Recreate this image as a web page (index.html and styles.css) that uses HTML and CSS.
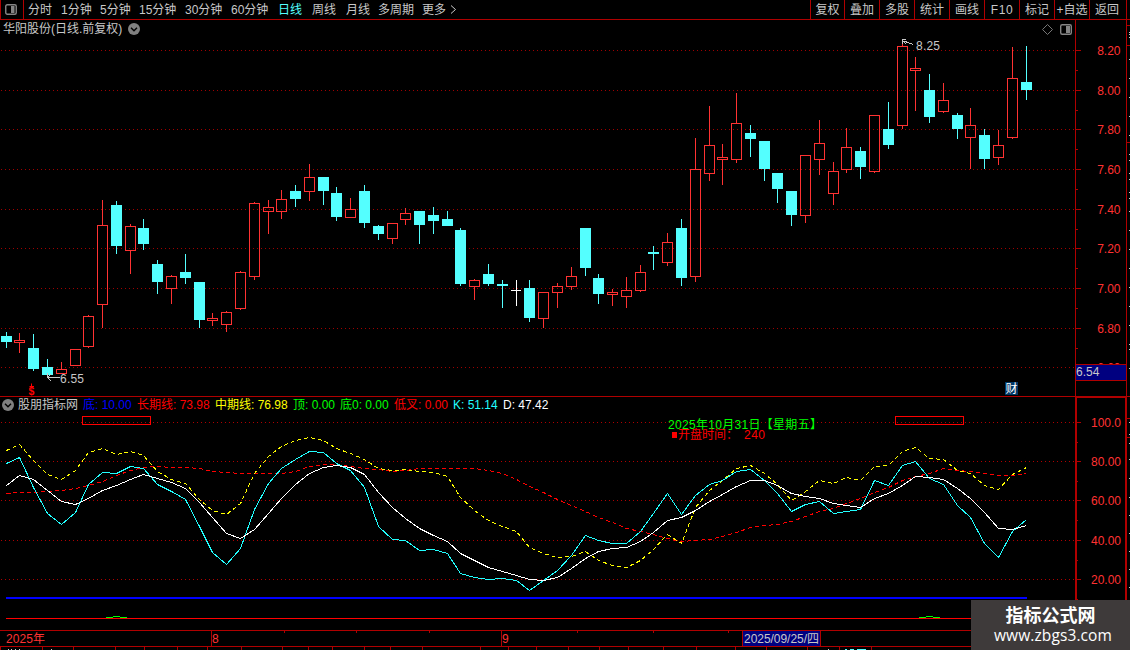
FILE: index.html
```html
<!DOCTYPE html>
<html lang="zh-CN">
<head>
<meta charset="utf-8">
<title>华阳股份 日线</title>
<link rel="stylesheet" href="styles.css">
</head>
<body>
<div class="app">
  <header class="toolbar">
    <div class="layout-btn">
      <svg width="12" height="11" viewBox="0 0 12 11"><rect x="0.75" y="0.75" width="10.5" height="9.5" rx="1.5" fill="none" stroke="#858585" stroke-width="1.4"/><rect x="6" y="2" width="3.5" height="7" fill="#858585"/></svg>
    </div>
    <nav class="periods">
      <span class="w33">分时</span><span class="w39">1分钟</span><span class="w39">5分钟</span><span class="w46">15分钟</span><span class="w46">30分钟</span><span class="w47">60分钟</span><span class="w34 active">日线</span><span class="w34">周线</span><span class="w32">月线</span><span class="w44">多周期</span><span class="w28">更多</span>
      <svg width="7" height="9" viewBox="0 0 7 9"><path d="M1 .5 5.5 4.5 1 8.5" fill="none" stroke="#c8c8c8"/></svg>
    </nav>
    <nav class="tools">
      <span class="t34">复权</span><span>叠加</span><span>多股</span><span>统计</span><span>画线</span><span class="latin">F10</span><span>标记</span><span>+自选</span><span class="t37">返回</span>
    </nav>
  </header>

  <section class="panel">
    <div class="caption">
      <span class="cap-text">华阳股份(日线.前复权)</span>
      <svg width="12" height="12" viewBox="0 0 12 12"><circle cx="6" cy="6" r="6" fill="#808080"/><path d="M3 4.7 6 7.7 9 4.7" fill="none" stroke="#000" stroke-width="1.4"/></svg>
    </div>
    <svg class="chart" width="1130" height="376" viewBox="0 20 1130 376">
      <g id="price-grid"></g>
      <g id="candles"></g>
      <g class="ann-line">
        <path d="M902.5 44V39.5H906M902 41.5H906M905 41.5 913.5 44.5M903 41 906 44"/>
        <path d="M47 377.5H59.5M47.500 373V378M47 377 51 381M48 377 51 374"/>
      </g>
      <text class="ann" x="916" y="50" textLength="24">8.25</text>
      <text class="ann" x="60" y="383" textLength="24">6.55</text>
      <path d="M31.500 383.500V387M29.500 386.500H34" stroke="red" fill="none"/>
      <text class="dividend" x="28.500" y="394.500">$</text>
      <path d="M1047.500 24.500 1052.500 29.500 1047.500 34.500 1042.500 29.500Z" fill="none" stroke="#777"/>
      <rect x="1060.700" y="24.700" width="10.600" height="9.600" rx="1.500" fill="none" stroke="#858585" stroke-width="1.400"/>
      <rect x="1066" y="26" width="4" height="7" fill="#858585"/>
      <rect x="1005" y="382" width="13" height="13" fill="#003866"/>
      <text class="news" x="1005.500" y="393">财</text>
    </svg>
  </section>

  <section class="panel indicator">
    <div class="legend">
      <svg width="12" height="12" viewBox="0 0 12 12"><circle cx="6" cy="6" r="6" fill="#808080"/><path d="M3 4.700 6 7.700 9 4.700" fill="none" stroke="#000" stroke-width="1.400"/></svg>
      <span class="lg name">股朋指标网</span><span class="lg bottom">底: 10.00</span><span class="lg long">长期线: 73.98</span><span class="lg mid">中期线: 76.98</span><span class="lg top">顶: 0.00</span><span class="lg zero">底0: 0.00</span><span class="lg cross">低叉: 0.00</span><span class="lg k">K: 51.14</span><span class="lg d">D: 47.42</span>
    </div>
    <svg class="chart" width="1130" height="234" viewBox="0 396 1130 234">
      <g id="osc-grid"></g>
      <g id="osc-lines"></g>
      <g fill="none" stroke="#f00"><rect x="82.500" y="416.500" width="68" height="8"/><rect x="895.500" y="416.500" width="68" height="8"/></g>
      <text class="today" x="668" y="428.500" textLength="154">2025年10月31日【星期五】</text>
      <rect x="672" y="432" width="5" height="6" fill="#f00"/>
      <text class="open" x="678" y="438.500" textLength="60">开盘时间：</text>
      <text class="open" x="744" y="438.500" textLength="21">240</text>
      <rect x="6" y="597" width="1021" height="2" fill="#00f"/>
      <rect x="6" y="618" width="1021" height="1" fill="#f00"/>
      <path d="M106 617.500H113M113 616.500H120M120 617.500H127M919 617.500H926M926 616.500H933M933 617.500H940" stroke="#0f0"/>
    </svg>
  </section>

  <footer class="panel">
    <svg class="chart" width="1130" height="20" viewBox="0 630 1130 20">
      <g id="time-axis"></g>
      <text class="axis" x="6" y="643" textLength="39">2025年</text>
      <text class="axis" x="212" y="643">8</text>
      <text class="axis" x="502" y="643">9</text>
      <rect x="742.500" y="630.500" width="78" height="16" fill="#000080" stroke="#b00000"/>
      <text class="ann" x="744" y="642.500" textLength="75">2025/09/25/四</text>
    </svg>
  </footer>

  <aside class="watermark">
    <div class="wm-title">指标公式网</div>
    <div class="wm-url">www.zbgs3.com</div>
  </aside>
</div>
<script src="chart.js"></script>
</body>
</html>
```

FILE: styles.css
```css
* { box-sizing: border-box; }
body { margin: 0; background: #000; overflow: hidden; }
.app {
  position: relative;
  width: 1130px;
  height: 650px;
  display: flex;
  flex-direction: column;
  background: #000;
  color: #c8c8c8;
  font-family: "Liberation Sans", "Noto Sans CJK SC", sans-serif;
  font-size: 12px;
  line-height: 18px;
  white-space: nowrap;
}
.toolbar {
  display: flex;
  height: 20px;
  flex: none;
  border-bottom: 1px solid #b00000;
}
.layout-btn {
  width: 24px;
  border-left: 1px solid #b00000;
  border-right: 1px solid #b00000;
  display: flex;
  align-items: center;
  padding-left: 4px;
}
.periods { display: flex; padding-left: 4px; align-items: center; }
.w28 { width: 28px; }
.w32 { width: 32px; }
.w33 { width: 33px; }
.w34 { width: 34px; }
.w39 { width: 39px; }
.w44 { width: 44px; }
.w46 { width: 46px; }
.w47 { width: 47px; }
.active { color: #54ffff; }
.tools { display: flex; margin-left: auto; margin-right: 3px; border-right: 1px solid #b00000; }
.tools span { width: 35px; border-left: 1px solid #b00000; text-align: center; line-height: 20px; }
.tools .t34 { width: 34px; }
.tools .t37 { width: 37px; padding-right: 2px; }
.tools .latin { letter-spacing: 0.6px; }
.panel { position: relative; flex: none; }
.chart { display: block; }
.caption, .legend {
  position: absolute;
  left: 0;
  top: 0;
  display: flex;
  align-items: center;
  height: 18px;
}
.caption { padding-left: 3px; gap: 5px; }
.cap-text { width: 120px; line-height: 20px; }
.legend { padding-left: 2px; }
.lg { flex: none; }
.name { width: 65px; margin-left: 4px; }
.bottom { width: 54px; color: #00f; }
.long { width: 78px; color: #f00; }
.mid { width: 78px; color: #ff0; }
.top { width: 47px; color: #0f0; }
.zero { width: 54px; color: #0f0; }
.cross { width: 59px; color: #f00; }
.k { width: 50px; color: #2ff; }
.d { color: #fff; }
text { font-family: "Liberation Sans", "Noto Sans CJK SC", sans-serif; font-size: 12px; }
.ann { fill: #c8c8c8; }
.ann-line { fill: none; stroke: #c8c8c8; shape-rendering: crispEdges; }
.axis { fill: #ff3232; }
.dividend { fill: #f00; font-size: 10.5px; font-weight: bold; }
.news { fill: #fff; }
.today { fill: #0f0; }
.open { fill: #f00; }
.watermark {
  position: absolute;
  left: 971px;
  top: 600px;
  width: 159px;
  height: 50px;
  background: #3e3a3a;
  color: #fff;
  text-align: center;
}
.wm-title {
  font: bold 18px/22px "Noto Sans CJK SC", sans-serif;
  padding-top: 3px;
}
.wm-url {
  font: 15.5px/19px "Open Sans", sans-serif;
  padding: 1px 0 0 5px;
  letter-spacing: 0.1px;
}
```

FILE: chart.js
```js
const NS = 'http://www.w3.org/2000/svg';
const RED = '#ff3232', CYAN = '#54ffff', AXIS = '#b00000';

function add(parent, tag, attrs, text) {
  const el = document.createElementNS(NS, tag);
  for (const k in attrs) el.setAttribute(k, attrs[k]);
  if (text) el.textContent = text;
  parent.appendChild(el);
  return el;
}
const rect = (g, x, y, w, h, fill) => add(g, 'rect', { x, y, width: w, height: h, fill });

// Bar centres; both panels share them.
const xs = [6,19,33,47,61,75,88,102,116,130,143,157,171,185,199,212,226,240,254,268,281,295,309,323,336,350,364,378,392,405,419,433,447,460,474,488,502,516,529,543,557,571,585,598,612,626,640,653,667,681,695,709,722,736,750,764,777,791,805,819,833,846,860,874,888,902,915,929,943,957,970,984,998,1012,1026];

// kind, body top, body bottom, high, low
const bars = `d 336 342 332 348|u 340 343 333 353|d 348 369 334 371|d 367 375 359 375|u 369 374 362 374|u 349 366 349 366|u 316 347 315 348|u 225 305 200 328|d 205 246 201 254|u 226 251 224 274|d 228 244 219 250|d 264 282 260 294|u 276 289 275 304|d 272 278 254 284|d 282 320 282 328|u 318 321 313 326|u 312 325 311 332|u 272 309 271 310|u 203 277 202 280|u 207 212 200 234|u 199 212 190 219|d 191 199 185 207|u 177 192 164 201|d 177 191 177 205|d 193 217 187 221|u 209 218 198 218|d 191 223 185 228|d 226 234 225 240|u 223 239 223 244|u 213 220 208 225|d 211 225 211 244|d 215 221 207 234|d 219 226 211 226|d 230 284 228 286|u 280 287 279 300|d 274 284 264 286|d 284 286 280 308|f 290 291 280 306|d 288 318 280 322|u 292 319 292 328|u 286 293 283 308|u 276 287 267 290|d 228 268 228 276|d 278 294 274 304|u 292 295 289 306|u 290 297 277 308|u 272 291 265 292|d 252 254 246 270|u 242 263 233 266|d 228 278 219 286|u 169 277 138 282|u 145 174 106 181|u 157 160 144 185|u 123 160 93 163|d 133 139 125 157|d 141 169 141 181|d 173 189 173 203|d 191 215 191 226|u 155 216 155 223|u 143 160 120 175|u 171 194 162 205|u 147 170 128 173|d 151 167 147 179|u 115 172 115 173|d 129 145 102 149|u 46 126 43 129|u 68 71 57 111|d 90 117 74 123|u 100 112 83 113|d 115 129 113 139|u 125 138 108 169|d 135 159 129 169|u 145 158 130 165|u 78 138 47 139|d 82 90 46 100`.split('|');

const cg = document.getElementById('candles');
bars.forEach((b, i) => {
  const p = b.split(' '), x = xs[i];
  const [top, bot, hi, lo] = p.slice(1).map(Number);
  const color = p[0] === 'u' ? RED : p[0] === 'd' ? CYAN : '#fff';
  if (top > hi) rect(cg, x, hi, 1, top - hi, color);
  if (lo > bot) rect(cg, x, bot, 1, lo - bot, color);
  if (p[0] === 'f') rect(cg, x, hi, 1, lo - hi, color);
  if (p[0] === 'u') add(cg, 'rect', { x: x - 4.5, y: top + 0.5, width: 10, height: bot - top - 1, fill: 'none', stroke: RED });
  else rect(cg, x - 5, top, p[0] === 'f' ? 10 : 11, bot - top, color);
});

function dotted(g, y, color) {
  add(g, 'path', { d: `M1 ${y + 0.5}H1074`, stroke: color, 'stroke-dasharray': '1 3', 'shape-rendering': 'crispEdges' });
}
function label(g, x, y, t) {
  add(g, 'text', { class: 'axis', x, y, 'text-anchor': 'end' }, t);
}

const pg = document.getElementById('price-grid');
[50, 90, 129, 169, 209, 248, 288, 328, 367].forEach((y, i) => {
  dotted(pg, y, '#a00000');
  rect(pg, 1075, y, 6, 1, AXIS);
  if (i < 8) rect(pg, 1076, y + 20, 2, 1, AXIS);
  label(pg, 1120.500, y + 5, (8.2 - i * 0.2).toFixed(2));
});
rect(pg, 1075, 20, 1, 376, AXIS);
rect(pg, 1126, 0, 1, 396, AXIS);
rect(pg, 1076, 364, 50, 17, AXIS);
rect(pg, 1076, 365, 50, 15, '#000080');
add(pg, 'text', { class: 'ann', x: 1076, y: 376 }, '6.54');
[25, 45, 142].forEach(y => rect(pg, 1127, y, 3, 1, AXIS));
[32, 34, 37, 59, 78, 97, 116, 135, 154, 160, 173, 179, 192, 198, 211, 230, 249, 268, 287, 306, 325, 344, 349, 368].forEach(y => rect(pg, 1129, y, 1, 1, '#c8c8c8'));

const og = document.getElementById('osc-grid');
rect(og, 0, 396, 1130, 1, AXIS);
rect(og, 1075, 397, 52, 1, AXIS);
rect(og, 1075, 396, 2, 234, AXIS);
rect(og, 1125, 396, 2, 234, AXIS);
[[422, '100.0'], [461, '80.00'], [500, '60.00'], [540, '40.00'], [579, '20.00']].forEach(([y, t]) => {
  dotted(og, y, AXIS);
  rect(og, 1077, y, 4, 1, AXIS);
  rect(og, 1077, y + 20, 1, 1, AXIS);
  label(og, 1121, y + 5, t);
});
[418, 437].forEach(y => rect(og, 1127, y, 3, 1, AXIS));
[422, 434, 443, 459, 478, 497, 515, 533, 551, 569, 587].forEach(y => rect(og, 1129, y, 1, 1, '#c8c8c8'));

const series = [
  { c: '#f00', dash: '4 3', y: [493,492,492,491,490,488,485,481,475,470,467,466,467,467,468,471,472,473,473,473,473,471,466,464,464,466,468,469,471,470,468,468,468,468,468,470,473,479,486,492,499,505,511,517,522,528,531,534,538,541,540,539,536,532,527,525,524,521,516,511,508,503,498,492,487,480,476,473,468,470,471,473,475,475,473] },
  { c: '#ff0', dash: '4 3', y: [450,444,460,474,479,470,452,448,454,451,455,471,479,483,499,510,514,503,473,456,446,440,437,440,448,453,459,468,470,469,471,472,476,497,510,520,526,531,547,553,557,556,551,560,565,567,560,549,534,543,507,490,480,468,465,473,484,500,491,480,483,477,480,466,465,451,447,458,459,470,473,485,489,474,467] },
  { c: '#2ff', y: [463,457,487,513,524,512,484,472,473,466,468,484,491,499,526,552,564,548,509,483,468,459,451,452,463,470,487,526,539,540,550,549,553,573,577,579,578,580,590,580,570,555,535,540,543,543,531,513,493,514,495,484,480,471,469,480,493,511,504,501,513,511,509,480,485,465,461,478,484,505,517,543,557,531,519] },
  { c: '#fff', y: [485,475,479,490,501,504,498,490,485,479,474,478,482,488,502,517,533,538,529,513,498,484,473,467,465,467,474,492,507,518,528,535,541,553,560,567,571,575,579,580,577,568,558,551,548,547,541,532,520,517,510,501,494,486,480,480,485,493,496,498,503,505,507,498,493,485,476,477,479,488,498,512,528,529,525] }
];
const lg = document.getElementById('osc-lines');
series.forEach(s => {
  const a = { points: s.y.map((y, i) => (xs[i] + 0.5) + ',' + (y + 0.5)).join(' '), fill: 'none', stroke: s.c, 'shape-rendering': 'crispEdges' };
  if (s.dash) a['stroke-dasharray'] = s.dash;
  add(lg, 'polyline', a);
});

const tg = document.getElementById('time-axis');
rect(tg, 0, 630, 1130, 1, AXIS);
rect(tg, 0, 646, 1130, 1, AXIS);
rect(tg, 211, 630, 1, 16, AXIS);
rect(tg, 501, 630, 1, 16, AXIS);
[284, 356, 429, 577, 653, 728].forEach(x => rect(tg, x, 631, 1, 2, AXIS));
[0, 42, 73, 115, 144, 177, 207, 241, 282, 308, 332, 364, 390, 422, 480, 508, 536, 568, 599, 628, 663, 696, 735, 766, 807, 839, 871].forEach(x => rect(tg, x, 647, 1, 3, AXIS));
[8, 11, 15, 19, 51, 828].forEach(x => rect(tg, x, 649, 1, 1, '#c8c8c8'));
[[845, 2], [850, 4], [857, 9]].forEach(([x, w]) => rect(tg, x, 649, w, 1, CYAN));
```
